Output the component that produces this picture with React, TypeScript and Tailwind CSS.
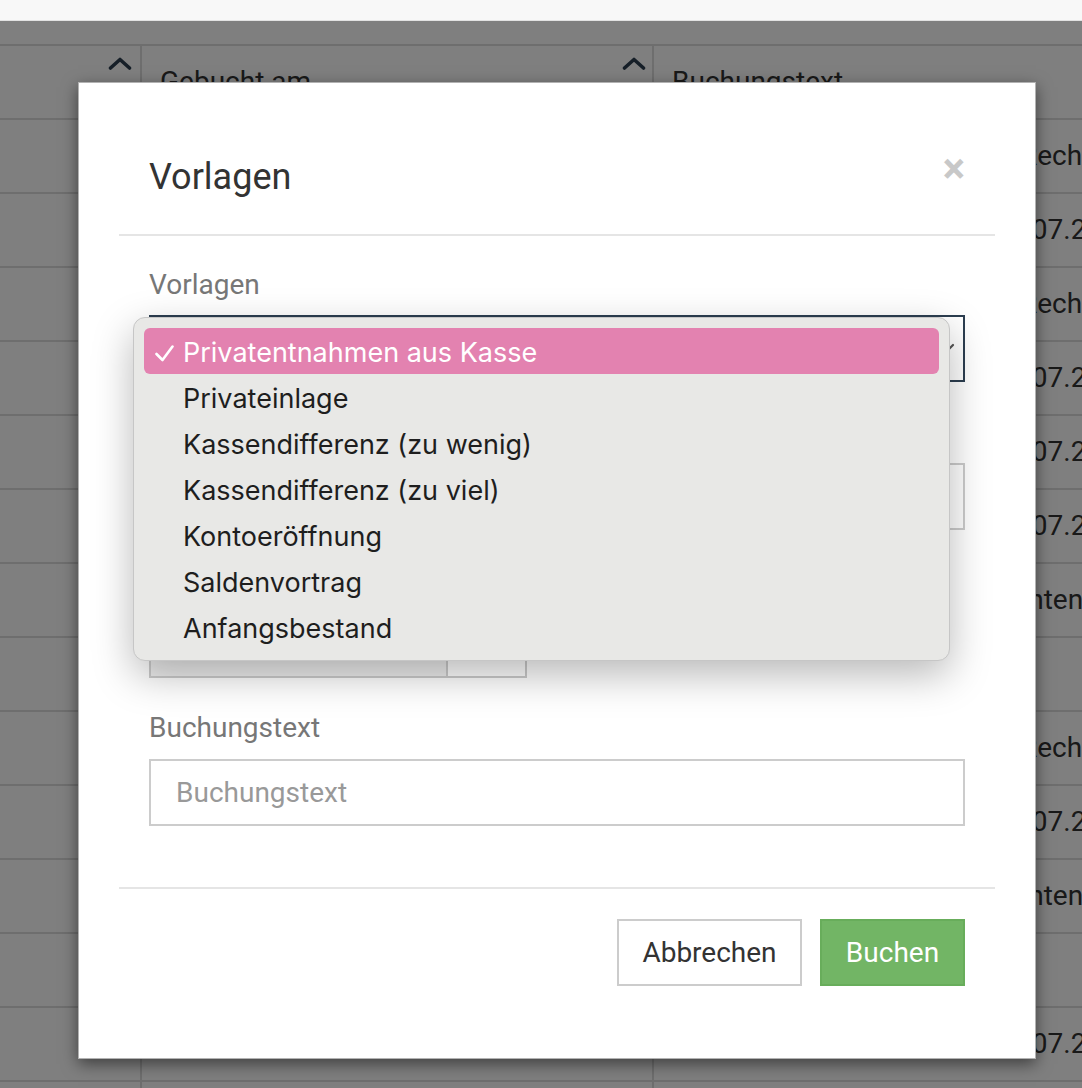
import React from "react";

const Chevron = () => (
  <svg width="24" height="13" viewBox="0 0 24 13" fill="none">
    <path d="M2.5 11L12 2.5L21.5 11" stroke="#2c3e50" strokeWidth="3.6" strokeLinecap="round" strokeLinejoin="round" />
  </svg>
);

type Row = { prefix: string; pw: string; suffix: string };

const rows: Row[] = [
  { prefix: "Kassenbuchung laut", pw: "w-[348px]", suffix: "Rechnung" },
  { prefix: "Einnahme vom", pw: "w-[321px]", suffix: "01.07.2021" },
  { prefix: "Kassenbuchung laut", pw: "w-[348px]", suffix: "Rechnung" },
  { prefix: "Einnahme vom", pw: "w-[321px]", suffix: "01.07.2021" },
  { prefix: "Einnahme vom", pw: "w-[321px]", suffix: "02.07.2021" },
  { prefix: "Einnahme vom", pw: "w-[321px]", suffix: "05.07.2021" },
  { prefix: "Privatentnahme", pw: "w-[323px]", suffix: "Kontenabgleich" },
  { prefix: "", pw: "w-[323px]", suffix: "" },
  { prefix: "Kassenbuchung laut", pw: "w-[348px]", suffix: "Rechnung" },
  { prefix: "Einnahme vom", pw: "w-[321px]", suffix: "06.07.2021" },
  { prefix: "Privatentnahme", pw: "w-[323px]", suffix: "Kontenabgleich" },
  { prefix: "", pw: "w-[323px]", suffix: "" },
  { prefix: "Einzahlung", pw: "w-[321px]", suffix: "07.07.2021" },
  { prefix: "", pw: "w-[323px]", suffix: "" },
];

const options = [
  "Privatentnahmen aus Kasse",
  "Privateinlage",
  "Kassendifferenz (zu wenig)",
  "Kassendifferenz (zu viel)",
  "Kontoeröffnung",
  "Saldenvortrag",
  "Anfangsbestand",
];

export default function App() {
  return (
    <div className="relative w-[1082px] h-[1088px] overflow-hidden bg-white font-[family-name:Roboto,sans-serif] text-[#333333]">
      {/* page behind */}
      <div className="h-[21px] bg-[#f8f8f8] border-b border-[#e2e2e2]" />
      <div className="h-[25px] border-b-2 border-[#dddddd]" />
      <div className="grid grid-cols-[142px_512px_1fr] h-[74px] border-b-2 border-[#dddddd] text-[28px]">
        <div className="border-r-2 border-[#dddddd] flex justify-end items-start pt-[11px] pr-[8px]">
          <Chevron />
        </div>
        <div className="border-r-2 border-[#dddddd] flex justify-between pl-[18px] pr-[6px]">
          <span className="self-center leading-[34px]">Gebucht am</span>
          <span className="pt-[11px]">
            <Chevron />
          </span>
        </div>
        <div className="flex items-center pl-[18px] whitespace-nowrap">
          <span className="leading-[34px]">Buchungstext</span>
        </div>
      </div>
      {rows.map((r, i) => (
        <div key={i} className="grid grid-cols-[142px_512px_1fr] h-[74px] border-b-2 border-[#dddddd] text-[28px]">
          <div className="border-r-2 border-[#dddddd]" />
          <div className="border-r-2 border-[#dddddd]" />
          <div className="flex items-center pl-[18px] whitespace-nowrap overflow-hidden">
            <span className={`${r.pw} shrink-0 overflow-hidden`}>{r.prefix}</span>
            <span>{r.suffix}</span>
          </div>
        </div>
      ))}

      {/* backdrop */}
      <div className="absolute left-0 right-0 top-[21px] bottom-0 bg-black/50" />

      {/* modal */}
      <div className="absolute left-[78px] top-[82px] w-[958px] bg-white border border-black/30 shadow-[0_5px_15px_rgba(0,0,0,0.5)]">
        <div className="mx-[40px] h-[153px] border-b-2 border-[#e5e5e5] pl-[30px] pr-[30px] pt-[74px] flex justify-between items-start">
          <h2 className="text-[36px] leading-[40px] text-[#333333]">Vorlagen</h2>
          <span className="text-[42px] leading-none font-bold text-[#c8c8c8] -mt-[9px]">×</span>
        </div>
        <div className="px-[70px] pt-[32px] pb-[61px]">
          <div className="mb-[33px]">
            <div className="text-[28px] leading-[34px] text-[#777777] mb-[13px]">Vorlagen</div>
            <div className="h-[67px] border-2 border-[#2c3e50] flex items-center justify-between pl-[24px] pr-[8px] text-[28px] text-[#555555]">
              <span>Privatentnahmen aus Kasse</span>
              <svg width="20" height="12" viewBox="0 0 20 12" fill="none">
                <path d="M2 2L10 10L18 2" stroke="#555555" strokeWidth="2.2" strokeLinecap="round" strokeLinejoin="round" />
              </svg>
            </div>
          </div>
          <div className="mb-[33px]">
            <div className="text-[28px] leading-[34px] text-[#777777] mb-[14px]">Gegenkonto</div>
            <div className="h-[67px] border-2 border-[#cccccc] bg-white" />
          </div>
          <div className="mb-[33px]">
            <div className="text-[28px] leading-[34px] text-[#777777] mb-[14px]">Betrag</div>
            <div className="flex w-[378px] h-[67px]">
              <div className="w-[299px] border-2 border-[#cccccc] bg-[#eeeeee]" />
              <div className="flex-1 border-2 border-l-0 border-[#cccccc] bg-white" />
            </div>
          </div>
          <div>
            <div className="text-[28px] leading-[34px] text-[#777777] mb-[14px]">Buchungstext</div>
            <div className="h-[67px] border-2 border-[#cccccc] flex items-center pl-[25px] text-[28px] text-[#999999]">
              Buchungstext
            </div>
          </div>
        </div>
        <div className="mx-[40px] border-t-2 border-[#e5e5e5]" />
        <div className="px-[70px] pt-[30px] pb-[72px] flex justify-end gap-[18px]">
          <button className="w-[185px] h-[67px] border-2 border-[#cccccc] bg-white text-[28px] text-[#333333]">
            Abbrechen
          </button>
          <button className="w-[145px] h-[67px] border-2 border-[#68ad5b] bg-[#72b565] text-[28px] text-white">
            Buchen
          </button>
        </div>
      </div>

      {/* open select menu */}
      <div className="absolute left-[133px] top-[317px] w-[817px] rounded-[12px] bg-[#e8e8e6] border border-[#c6c6c6] shadow-[0_14px_40px_rgba(0,0,0,0.28)] p-[10px] font-[family-name:Inter,sans-serif] text-[27px] text-[#1e1e1e]">
        {options.map((o, i) => (
          <div
            key={o}
            className={`h-[46px] pt-[4px] flex items-center rounded-[6px] ${i === 0 ? "bg-[#e382b0] text-white" : ""}`}
          >
            <span className="w-[39px] shrink-0 flex pl-[11px]">
              {i === 0 && (
                <svg width="19" height="17" viewBox="0 0 19 17" fill="none">
                  <path d="M1.5 9L7.5 15L17.5 1.5" stroke="white" strokeWidth="2.6" strokeLinecap="round" strokeLinejoin="round" />
                </svg>
              )}
            </span>
            <span>{o}</span>
          </div>
        ))}
      </div>
    </div>
  );
}
